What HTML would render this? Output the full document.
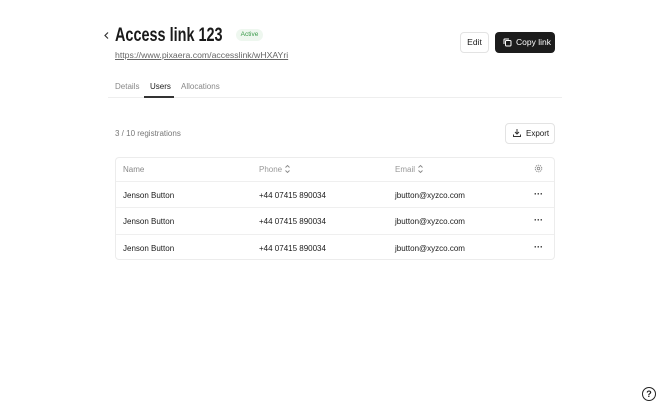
<!DOCTYPE html>
<html><head><style>
*{margin:0;padding:0;box-sizing:border-box}
body{width:670px;height:415px;background:#fff;font-family:"Liberation Sans",sans-serif;color:#1a1a1a;position:relative;overflow:hidden}
.a{position:absolute}
.t{font-size:8px}
</style></head><body>
<svg class="a" style="left:103px;top:31px" width="8" height="9" viewBox="0 0 8 9"><path d="M5 1.5L2 4.5L5 7.5" fill="none" stroke="#333" stroke-width="1.2"/></svg>
<div class="a" style="left:115px;top:25px;font-size:19px;font-weight:bold;white-space:nowrap;transform:scaleX(0.76);transform-origin:left top">Access link 123</div>
<div class="a" style="left:236px;top:29px;width:27px;height:12px;border-radius:6px;background:#eef7ef;color:#3a9a4a;font-size:6.5px;text-align:center;line-height:12px">Active</div>
<div class="a" style="left:115px;top:50px;font-size:8.7px;color:#666;text-decoration:underline">https://www.pixaera.com/accesslink/wHXAYri</div>
<div class="a" style="left:460px;top:32px;width:29px;height:21px;border:1px solid #e3e3e3;border-radius:4px;font-size:8.5px;text-align:center;line-height:19px">Edit</div>
<div class="a" style="left:495px;top:32px;width:60px;height:21px;background:#1c1c1c;border-radius:4px;color:#fff;font-size:8.5px;line-height:21px;padding-left:21px">Copy link</div>
<svg class="a" style="left:503px;top:38px" width="9" height="9" viewBox="0 0 9 9"><rect x="2.5" y="2.5" width="5.5" height="5.5" rx="1" fill="none" stroke="#fff" stroke-width="1"/><path d="M1 6V1.5A.5.5 0 0 1 1.5 1H6" fill="none" stroke="#fff" stroke-width="1"/></svg>
<div class="a t" style="left:115px;top:82px;color:#888">Details</div>
<div class="a t" style="left:150px;top:82px;color:#1a1a1a">Users</div>
<div class="a t" style="left:181px;top:82px;color:#888">Allocations</div>
<div class="a" style="left:108px;top:97px;width:454px;height:1px;background:#eee"></div>
<div class="a" style="left:144px;top:96px;width:30px;height:2px;background:#333"></div>
<div class="a t" style="left:115px;top:129px;color:#777">3 / 10 registrations</div>
<div class="a" style="left:505px;top:123px;width:50px;height:21px;border:1px solid #e3e3e3;border-radius:4px;font-size:8px;line-height:19px;padding-left:20px">Export</div>
<svg class="a" style="left:512px;top:128px" width="10" height="10" viewBox="0 0 10 10"><path d="M5 1v5M3 4l2 2 2-2M1.5 6.5v2h7v-2" fill="none" stroke="#333" stroke-width="1"/></svg>
<div class="a" style="left:115px;top:157px;width:440px;height:103px;border:1px solid #ececec;border-radius:4px"></div>
<div class="a" style="left:116px;top:181px;width:438px;height:1px;background:#efefef"></div>
<div class="a" style="left:116px;top:207px;width:438px;height:1px;background:#efefef"></div>
<div class="a" style="left:116px;top:234px;width:438px;height:1px;background:#efefef"></div>
<div class="a t" style="left:123px;top:165px;color:#888">Name</div>
<div class="a t" style="left:259px;top:165px;color:#999">Phone</div>
<div class="a t" style="left:395px;top:165px;color:#999">Email</div>
<svg class="a" style="left:284px;top:164px" width="7" height="10" viewBox="0 0 7 10"><path d="M1.5 3.5L3.5 1.5 5.5 3.5M1.5 6.5L3.5 8.5 5.5 6.5" fill="none" stroke="#888" stroke-width=".9"/></svg>
<svg class="a" style="left:417px;top:164px" width="7" height="10" viewBox="0 0 7 10"><path d="M1.5 3.5L3.5 1.5 5.5 3.5M1.5 6.5L3.5 8.5 5.5 6.5" fill="none" stroke="#888" stroke-width=".9"/></svg>
<svg class="a" style="left:534px;top:164px" width="9" height="9" viewBox="0 0 9 9"><circle cx="4.5" cy="4.5" r="3.3" fill="none" stroke="#888" stroke-width=".9" stroke-dasharray="1.3 .8"/><circle cx="4.5" cy="4.5" r="1.3" fill="none" stroke="#888" stroke-width=".8"/></svg>
<div class="a t" style="left:123px;top:191px">Jenson Button</div><div class="a t" style="left:259px;top:191px">+44 07415 890034</div><div class="a t" style="left:395px;top:191px">jbutton@xyzco.com</div><div class="a" style="left:534px;top:189px;font-size:9px;font-weight:bold">···</div>
<div class="a t" style="left:123px;top:217px">Jenson Button</div><div class="a t" style="left:259px;top:217px">+44 07415 890034</div><div class="a t" style="left:395px;top:217px">jbutton@xyzco.com</div><div class="a" style="left:534px;top:215px;font-size:9px;font-weight:bold">···</div>
<div class="a t" style="left:123px;top:244px">Jenson Button</div><div class="a t" style="left:259px;top:244px">+44 07415 890034</div><div class="a t" style="left:395px;top:244px">jbutton@xyzco.com</div><div class="a" style="left:534px;top:242px;font-size:9px;font-weight:bold">···</div>
<div class="a" style="left:642px;top:387px;width:14px;height:14px;border:1.3px solid #222;border-radius:50%;font-size:9px;text-align:center;line-height:12px;font-weight:bold">?</div>
</body></html>
